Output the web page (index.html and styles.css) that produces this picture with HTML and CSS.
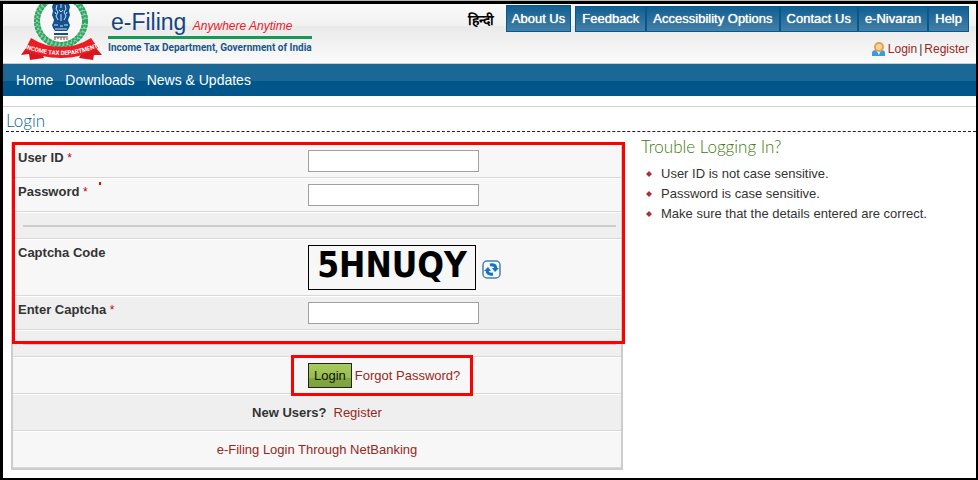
FILE: index.html
```html
<!DOCTYPE html>
<html lang="en">

<head>
    <meta charset="UTF-8">
    <meta name="viewport" content="width=device-width, initial-scale=1.0">
    <title>e-Filing - Login</title>

    <link rel="stylesheet" href="styles.css">
</head>

<body>
    <div class="page">
        <header class="header">
            <div class="brand">
                <svg class="emblem" width="82" height="56" viewBox="0 0 82 56" aria-hidden="true">
                    <!-- wreath -->
                    <circle cx="40" cy="17" r="23" fill="#f8f8f8" />
                    <circle cx="40" cy="17" r="24" fill="none" stroke="#8fd0a8" stroke-width="6" />
                    <circle cx="40" cy="17" r="26" fill="none" stroke="#2da561" stroke-width="2" stroke-dasharray="3 1" />
                    <circle cx="40" cy="17" r="24" fill="none" stroke="#2da561" stroke-width="2" stroke-dasharray="2 2" />
                    <circle cx="40" cy="17" r="22" fill="none" stroke="#2da561" stroke-width="2" stroke-dasharray="3 1" />
                    <!-- lion capital -->
                    <g fill="#12508f">
                        <path d="M32 0h16l1 3-1 4 1 4-2 5 1 3H32l1-3-2-5 1-4-1-4z" />
                        <path d="M32 19h16l1 2-1 3-2 3H34l-2-3-1-3z" />
                        <path d="M33 29h14v2H33z" />
                    </g>
                    <g stroke="#cfe0f2" fill="none">
                        <path d="M36 1l-1 4 2 3-2 4 2 4M44 1l1 4-2 3 2 4-2 4M40 0v4M38 6l2 2 2-2M40 10v7M34 8l1 2M46 8l-1 2" />
                        <path d="M33 21h4M43 21h4M39 22h3M34 25h12" />
                    </g>
                    <path d="M33 33h14M34 33v3M37 33v2M40 33v3M43 33v3M46 34v2" stroke="#7b5436" fill="none" />
                    <!-- ribbon -->
                    <path d="M5 44L0 51l8-1 1 6 14-2-4-8zM75 44l6 7-8 0-1 5-14-2 4-8z" fill="#d9161d" />
                    <path d="M10 34Q24 43 40 43T70 34L77 44Q60 54 40 54T4 46z" fill="#ec1c24" />
                    <path id="ribbonLine" d="M3 44Q22 51 40 51T78 43" fill="none" />
                    <text class="ribbon-text"><textPath href="#ribbonLine" startOffset="50%">INCOME TAX DEPARTMENT</textPath></text>
                </svg>
                <div class="brand-text">
                    <div class="brand-name">e-Filing <em>Anywhere Anytime</em></div>
                    <div class="brand-dept">Income Tax Department, Government of India</div>
                </div>
            </div>

            <div class="tools">
                <div class="top-menu">
                    <a class="hindi" href="#" lang="hi">हिन्दी</a>
                    <a class="top-link about" href="#">About Us</a>
                    <nav class="top-group">
                        <a class="top-link" href="#">Feedback</a>
                        <a class="top-link" href="#">Accessibility Options</a>
                        <a class="top-link" href="#">Contact Us</a>
                        <a class="top-link" href="#">e-Nivaran</a>
                        <a class="top-link" href="#">Help</a>
                    </nav>
                </div>
                <div class="account">
                    <svg width="15" height="16" viewBox="0 0 15 16" aria-hidden="true">
                        <path d="M1 15v-3q0-3 4-3h5q4 0 4 3v3z" fill="#3a9be0" />
                        <path d="M5 9h5l-2 5z" fill="#e8f4fd" />
                        <circle cx="8" cy="6" r="5" fill="#e8a04c" />
                        <circle cx="8" cy="6" r="3" fill="#fbd49a" />
                    </svg>
                    <a href="#">Login</a> | <a href="#">Register</a>
                </div>
            </div>
        </header>

        <nav class="main-nav">
            <a href="#">Home</a>
            <a href="#">Downloads</a>
            <a href="#">News &amp; Updates</a>
        </nav>

        <main>
            <h1 class="title">Login</h1>

            <div class="content">
                <form class="login-form">
                    <div class="fields">
                        <div class="row">
                            <label for="userId">User ID <span class="req">*</span></label>
                            <input type="text" id="userId">
                        </div>
                        <div class="row">
                            <label class="password-label" for="password">Password <span class="req">*</span></label>
                            <input type="password" id="password">
                        </div>
                        <div class="row divider"><hr></div>
                        <div class="row">
                            <span class="caption">Captcha Code</span>
                            <div class="captcha">
                                <div class="captcha-code">5HNUQY</div>
                                <button type="button" class="refresh" aria-label="Refresh captcha">
                                    <svg width="19" height="19" viewBox="0 0 19 19" aria-hidden="true">
                                        <rect x="1" y="1" width="17" height="17" rx="4" fill="#f4f8fc" stroke="#4d7fb3" stroke-width="1.5" />
                                        <!-- two arrows chasing each other -->
                                        <path d="M8 5q5-1 6 3M11 14q-5 1-6-3" fill="none" stroke="#1273c4" stroke-width="3" />
                                        <path d="M10 8h7l-4 4zM9 11H2l4-4z" fill="#1273c4" />
                                    </svg>
                                </button>
                            </div>
                        </div>
                        <div class="row shaded">
                            <label for="captcha">Enter Captcha <span class="req">*</span></label>
                            <input type="text" id="captcha">
                        </div>
                        <div class="row divider"><hr></div>
                    </div>
                    <div class="row">
                        <div class="submit">
                            <button type="submit" class="login-btn">Login</button>
                            <a href="#">Forgot Password?</a>
                        </div>
                    </div>
                    <div class="row centered shaded"><strong>New Users?</strong> <a href="#">Register</a></div>
                    <div class="row centered"><a href="#">e-Filing Login Through NetBanking</a></div>
                </form>

                <aside class="help">
                    <h2>Trouble Logging In?</h2>
                    <ul>
                        <li>User ID is not case sensitive.</li>
                        <li>Password is case sensitive.</li>
                        <li>Make sure that the details entered are correct.</li>
                    </ul>
                </aside>
            </div>
        </main>
    </div>
</body>

</html>
```
FILE: styles.css
```css
* {
    box-sizing: border-box;
}

body {
    margin: 0;
    border-top: 1px solid #b4bbb5;
    font-family: "Liberation Sans", Arial, sans-serif;
    font-size: 13px;
    line-height: 20px;
    color: #333;
}

a {
    color: #98281c;
    text-decoration: none;
}

.page {
    min-height: calc(100vh - 1px);
    border: solid #000;
    border-width: 3px 2px 2px 3px;
    background: #fff;
}

/* Header */
.header {
    display: flex;
    justify-content: space-between;
    height: 60px;
    padding: 0 7px 0 18px;
    border-bottom: 1px solid #ccc;
    background: linear-gradient(#fafafa, #f1f1f1 22px, #e9e9e9 22px, #fbfbfb);
}

.brand {
    display: flex;
    gap: 5px;
}

.ribbon-text {
    font-family: Roboto, "Liberation Sans", sans-serif;
    font-size: 6px;
    font-weight: bold;
    text-anchor: middle;
    fill: #fff;
}

.brand-text {
    white-space: nowrap;
}

.brand-name {
    height: 35px;
    padding-left: 3px;
    border-bottom: 3px solid #159a55;
    font-size: 23px;
    line-height: 36px;
    color: #15457f;
}

.brand-name em {
    font-size: 12px;
    color: #e8202a;
}

.brand-dept {
    font-family: Roboto, "Liberation Sans", sans-serif;
    font-size: 10px;
    font-weight: bold;
    line-height: 18px;
    color: #17578c;
}

.tools {
    display: flex;
    flex-direction: column;
    align-items: flex-end;
    padding-top: 1px;
}

.top-menu {
    display: flex;
    align-items: flex-end;
    gap: 4px;
}

.hindi {
    margin-right: 8px;
    font-size: 14px;
    font-weight: bold;
    line-height: 24px;
    color: #000;
}

.top-group {
    display: flex;
}

.top-link {
    padding: 0 6px;
    border: 1px solid #045a8d;
    background: linear-gradient(#115f91, #4480a8);
    line-height: 24px;
    text-shadow: 0 0 1px #fff;
    color: #fff;
}

.about {
    padding: 0 5px;
    line-height: 25px;
}

.account {
    display: flex;
    align-items: center;
    gap: 2px;
    padding-top: 7px;
    font-size: 12px;
}

/* Main navigation */
.main-nav {
    display: flex;
    gap: 12px;
    padding: 0 13px;
    background: linear-gradient(#1b6896 17px, #00558b 17px);
    font-size: 14px;
    line-height: 32px;
}

.main-nav a {
    color: #fff;
}

main {
    margin-top: 10px;
    border-top: 1px solid #d0d0d0;
}

.title, .help h2 {
    margin: 0;
    font-family: Lato, sans-serif;
    font-size: 17px;
    font-weight: 300;
}

.title {
    height: 25px;
    margin-left: 3px;
    border-bottom: 1px dashed #222;
    line-height: 28px;
    color: #0f5f92;
}

.content {
    display: grid;
    grid-template-columns: 612fr 335fr;
    align-items: start;
    gap: 18px;
    padding: 10px 0 8px 8px;
}

/* Login form */
.login-form {
    border: 2px solid #ccc;
}

.row {
    display: grid;
    grid-template-columns: 295fr 313fr;
    align-items: start;
    padding: 5px 0;
    border-top: 1px solid #fff;
    border-bottom: 1px solid #d8d8d8;
    background: #f7f7f7;
}

.row label, .caption {
    padding-left: 5px;
    line-height: 16px;
    font-weight: bold;
}

.row input {
    width: 171px;
    height: 22px;
    border: 1px solid #a0a0a0;
    background: #fff;
}

.req {
    font-size: 12px;
    font-weight: normal;
    color: #c00;
}

.shaded, .divider {
    background: #efefef;
}

.divider {
    display: block;
    padding: 12px 5px 11px 10px;
}

.divider hr {
    height: 2px;
    margin: 0;
    border: 0;
    background: #ccc;
}

.captcha {
    display: flex;
    align-items: center;
    gap: 6px;
}

.captcha-code {
    width: 168px;
    height: 45px;
    border: 1px solid #000;
    font-family: "DejaVu Sans Condensed", "DejaVu Sans", sans-serif;
    font-size: 35px;
    font-weight: bold;
    line-height: 38px;
    text-align: center;
    color: #000;
}

.refresh {
    display: flex;
    padding: 4px 0 0;
    border: 0;
    background: none;
}

.submit {
    grid-column: 2;
    justify-self: start;
    position: relative;
    display: flex;
    align-items: center;
    gap: 3px;
}

.login-btn {
    height: 25px;
    padding: 0 5px;
    border: 1px solid #222;
    background: linear-gradient(#a9cb60, #97bd4a 60%, #82a840 60%, #7da33e);
    font: inherit;
    color: #111;
}

.centered {
    display: flex;
    justify-content: center;
    gap: 7px;
    padding: 8px 0 7px;
}

/* Red highlight frames */
.fields, .password-label {
    position: relative;
}

.fields::after, .submit::after {
    content: "";
    position: absolute;
    border: 3px solid #f00;
    pointer-events: none;
}

.fields::after {
    inset: -2px -4px 13px -1px;
}

.submit::after {
    inset: -8px -13px -8px -17px;
}

.password-label::after {
    content: "";
    position: absolute;
    top: -2px;
    left: 86px;
    width: 2px;
    height: 3px;
    background: #f00;
}

/* Help */
.help h2 {
    line-height: 10px;
    color: #3f7a10;
}

.help ul {
    margin: 0;
    padding: 12px 0 0 5px;
    list-style: none;
}

.help li {
    display: flex;
    align-items: center;
    gap: 9px;
}

.help li::before {
    content: "";
    width: 6px;
    height: 6px;
    background: #a8323a;
    clip-path: polygon(50% 0, 100% 50%, 50% 100%, 0 50%);
}
```
